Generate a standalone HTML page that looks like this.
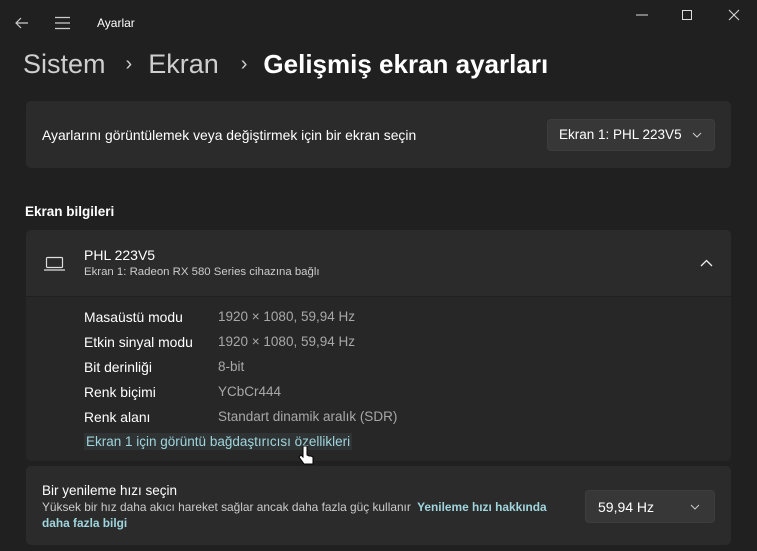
<!DOCTYPE html>
<html><head><meta charset="utf-8"><style>
*{margin:0;padding:0;box-sizing:border-box}
body{width:757px;height:551px;background:#202020;font-family:"Liberation Sans",sans-serif;color:#fff;position:relative;overflow:hidden}
.a{position:absolute;white-space:nowrap}
.card{position:absolute;left:26px;width:705px;background:#2b2b2b;border-radius:5px}
.dd{position:absolute;background:#373737;border-radius:4px;border:1px solid #3d3d3d;font-size:13.5px;color:#fff}
.lbl{font-size:13.9px;color:#fff}
.val{font-size:13.5px;color:#a8a8a8}
</style></head><body>
<svg class="a" style="left:14px;top:15px" width="16" height="16" viewBox="0 0 16 16"><path d="M14 8H2M7 3L2 8l5 5" stroke="#ccc" stroke-width="1.2" fill="none"/></svg>
<svg class="a" style="left:55px;top:16px" width="16" height="14"><path d="M0 1.5h15M0 7h15M0 12.5h15" stroke="#ccc" stroke-width="1.2"/></svg>
<div class="a" style="left:97px;top:16px;font-size:12px;color:#fff">Ayarlar</div>
<svg class="a" style="left:636px;top:8px" width="120" height="16"><path d="M0 7h12" stroke="#ddd" stroke-width="1"/><rect x="46.5" y="2.5" width="9" height="9" stroke="#ddd" fill="none"/><path d="M93 2l10 10M103 2l-10 10" stroke="#ddd"/></svg>
<div class="a" style="left:23px;top:46px;font-size:27px;line-height:36px"><span style="color:#cfcfcf">Sistem</span><span style="color:#cfcfcf;font-size:20px;margin:0 16px 0 20px;position:relative;top:-3px">›</span><span style="color:#cfcfcf">Ekran</span><span style="color:#cfcfcf;font-size:20px;margin:0 16px 0 22px;position:relative;top:-3px">›</span><span style="font-weight:bold;font-size:26px">Gelişmiş ekran ayarları</span></div>
<div class="card" style="top:101px;height:67px"></div>
<div class="a lbl" style="left:42px;top:127px">Ayarlarını görüntülemek veya değiştirmek için bir ekran seçin</div>
<div class="dd" style="left:547px;top:119px;width:168px;height:32px"><span class="a" style="left:11px;top:7px">Ekran 1: PHL 223V5</span><svg class="a" style="left:144px;top:12px" width="10" height="6"><path d="M1 1l4 4 4-4" stroke="#ccc" fill="none"/></svg></div>
<div class="a" style="left:25px;top:204px;font-size:13.5px;font-weight:bold">Ekran bilgileri</div>
<div class="card" style="top:230px;height:66px;border-radius:5px 5px 0 0"></div>
<div class="card" style="top:297px;height:164px;border-radius:0 0 5px 5px;background:#272727"></div>
<svg class="a" style="left:44px;top:256px" width="21" height="16"><rect x="2.5" y="1.5" width="16" height="10" rx="1" stroke="#ddd" fill="none" stroke-width="1.2"/><path d="M0 14h21" stroke="#ddd" stroke-width="1.3"/></svg>
<div class="a" style="left:84px;top:247px;font-size:14px">PHL 223V5</div>
<div class="a" style="left:84px;top:266px;font-size:11.4px;color:#ccc">Ekran 1: Radeon RX 580 Series cihazına bağlı</div>
<svg class="a" style="left:700px;top:259px" width="13" height="8"><path d="M1 7l5.5-5.5L12 7" stroke="#eee" stroke-width="1.3" fill="none"/></svg>
<div class="a lbl" style="left:84px;top:309px">Masaüstü modu</div><div class="a val" style="left:218px;top:309px">1920 × 1080, 59,94 Hz</div>
<div class="a lbl" style="left:84px;top:334px">Etkin sinyal modu</div><div class="a val" style="left:218px;top:334px">1920 × 1080, 59,94 Hz</div>
<div class="a lbl" style="left:84px;top:359px">Bit derinliği</div><div class="a val" style="left:218px;top:359px">8-bit</div>
<div class="a lbl" style="left:84px;top:384px">Renk biçimi</div><div class="a val" style="left:218px;top:384px">YCbCr444</div>
<div class="a lbl" style="left:84px;top:409px">Renk alanı</div><div class="a val" style="left:218px;top:409px">Standart dinamik aralık (SDR)</div>
<div class="a" style="left:84px;top:433px;font-size:13.5px;color:#9fd5dd;background:#2f3334;padding:1px 2px">Ekran 1 için görüntü bağdaştırıcısı özellikleri</div>
<div class="card" style="top:466px;height:79px"></div>
<div class="a" style="left:42px;top:483px;font-size:13.5px">Bir yenileme hızı seçin</div>
<div class="a" style="left:42px;top:500px;font-size:11.9px;color:#ccc">Yüksek bir hız daha akıcı hareket sağlar ancak daha fazla güç kullanır <b style="color:#9fd5dd;margin-left:3px">Yenileme hızı hakkında</b></div>
<div class="a" style="left:42px;top:516px;font-size:11.9px;color:#9fd5dd;font-weight:bold">daha fazla bilgi</div>
<div class="dd" style="left:585px;top:490px;width:130px;height:33px"><span class="a" style="left:12px;top:8px;font-size:14px">59,94 Hz</span><svg class="a" style="left:104px;top:13px" width="10" height="6"><path d="M1 1l4 4 4-4" stroke="#ccc" fill="none"/></svg></div>
<svg class="a" style="left:298px;top:444px" width="18" height="24"><path d="M5 2v11l-2-2-2 2 5 7h9v-7l-2-1-2 0-2-1V2z" fill="#fff" stroke="#000"/></svg>
</body></html>
